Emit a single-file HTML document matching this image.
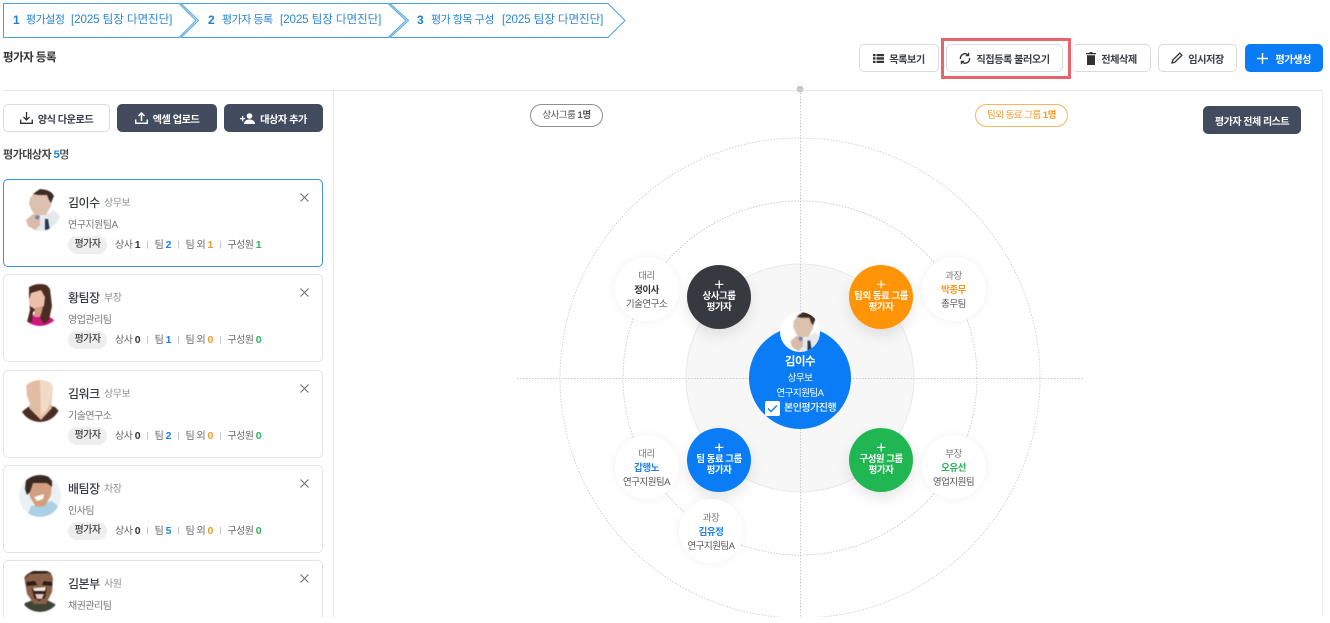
<!DOCTYPE html>
<html lang="ko"><head><meta charset="utf-8"><title>평가자 등록</title>
<style>
*{box-sizing:border-box}
html,body{margin:0;padding:0;background:#fff;width:1330px;height:623px;overflow:hidden}
body{position:relative;font-family:"Liberation Sans","Noto Sans CJK KR",sans-serif;color:#333;letter-spacing:-.5px}
#w{position:absolute;left:0;top:0;width:1330px;height:623px;overflow:hidden}
.a{position:absolute;white-space:nowrap}
.bc{font-size:11px;color:#2b86d6;line-height:18px;top:11px}
.bd{font-size:11.6px;color:#2b86d6;line-height:18px;top:11px;letter-spacing:-.1px}
.bn{font-size:12px;font-weight:700;color:#1f7fd4;line-height:18px;top:11px}
.btn{position:absolute;height:28px;border:1px solid #d9dcdf;border-radius:5px;background:#fff;display:flex;align-items:center;justify-content:center;gap:5px;font-size:10.200px;font-weight:700;color:#3a3f47}
.dk{background:#434b5e;border:0;color:#fff}
.card{position:absolute;left:3px;width:320px;height:88px;border:1px solid #e2e4e7;border-radius:5px;background:#fff}
.card.on{border-color:#3d93e0}
.card svg.f{position:absolute;left:15px;top:9px;border-radius:50%;filter:blur(.5px)}
.nm{position:absolute;left:64px;top:14px;font-size:12px;font-weight:500;color:#383c44;line-height:18px}
.rk{position:absolute;left:100px;top:16px;font-size:10px;color:#8b8f95;line-height:16px}
.tm{position:absolute;left:64px;top:38px;font-size:10px;color:#777;line-height:16px}
.tg{position:absolute;left:64px;top:56px;width:39px;height:18px;border-radius:9px;background:#eee;font-size:10px;font-weight:500;color:#444;text-align:center;line-height:18px}
.st{position:absolute;left:111px;top:56px;font-size:10px;color:#666;line-height:18px;white-space:nowrap}
.st b{font-weight:700;font-size:10.5px}
.st i{font-style:normal;color:#aaa;margin:0 6.5px;font-size:8px;position:relative;top:-1px}
.k{color:#333}.b{color:#1a82ea}.o{color:#f59a23}.g{color:#27b45a}
.x{position:absolute;left:296px;top:13px}
.c{position:absolute;border-radius:50%;text-align:center;transform:translate(-50%,-50%)}
.grp{width:64px;height:64px;color:#fff;font-size:9.500px;font-weight:700;line-height:11px;padding-top:13px;box-shadow:0 6px 14px rgba(0,0,0,.10)}
.grp span{display:block;font-size:17px;font-weight:400;line-height:13px;height:13px}
.wh{width:64px;height:64px;background:#fff;font-size:9.500px;color:#555;line-height:14.300px;padding-top:12.500px;box-shadow:0 0 10px rgba(0,0,0,.06)}
.wh b{font-weight:700;display:block}
.wh u{text-decoration:none;color:#777;display:block}
</style></head><body><div id="w">

<svg class="a" style="left:0;top:0" width="640" height="42" fill="#fff" stroke="#4a9fe0" stroke-width="1">
<polygon points="3.500,3.500 179,3.500 196,20.500 179,37.500 3.500,37.500"/>
<polygon points="181,3.500 388,3.500 406,20.500 388,37.500 181,37.500 198.500,20.500"/>
<polygon points="390,3.500 608,3.500 625,20.500 608,37.500 390,37.500 408.500,20.500"/>
</svg>
<div class="a bn" style="left:13px">1</div>
<div class="a bc" style="left:26px">평가설정</div>
<div class="a bd" style="left:71px">[2025 팀장 다면진단]</div>
<div class="a bn" style="left:208px">2</div>
<div class="a bc" style="left:222px">평가자 등록</div>
<div class="a bd" style="left:280px">[2025 팀장 다면진단]</div>
<div class="a bn" style="left:417px">3</div>
<div class="a bc" style="left:431px">평가 항목 구성</div>
<div class="a bd" style="left:502px">[2025 팀장 다면진단]</div>

<div class="a" style="left:3px;top:49px;font-size:11.500px;font-weight:700;color:#333;line-height:18px">평가자 등록</div>

<div class="btn" style="left:859px;top:44px;width:80px"><svg width="11" height="9" viewBox="0 0 11 9" fill="#333"><path d="M0 0h2.500v2.300H0zM3.500 0H11v2.300H3.500zM0 3.300h2.500v2.300H0zM3.500 3.300H11v2.300H3.500zM0 6.700h2.500V9H0zM3.500 6.700H11V9H3.500z"/></svg>목록보기</div>
<div class="btn" style="left:946px;top:44px;width:117px"><svg width="12" height="13" viewBox="0 0 12 13" fill="none" stroke="#333" stroke-width="1.400"><path d="M1.500 7A4.500 4.500 0 0 1 9 3"/><path d="M10.500 6A4.500 4.500 0 0 1 3 10"/><path d="M9.600.8V3.600H6.800" stroke-width="1.200"/><path d="M2.400 12.200V9.400H5.200" stroke-width="1.200"/></svg>직접등록 불러오기</div>
<div class="a" style="left:941px;top:38px;width:130px;height:41px;border:3px solid #e8636a"></div>
<div class="btn" style="left:1072px;top:44px;width:79px;border-left-color:#eee"><svg width="10" height="13" viewBox="0 0 10 13" fill="#333"><path d="M3.500 0h3v1H10v1.300H0V1h3.500zM1 3.200h8V13H1z"/></svg>전체삭제</div>
<div class="btn" style="left:1158px;top:44px;width:79px"><svg width="12" height="12" viewBox="0 0 12 12" fill="none" stroke="#333" stroke-width="1.300"><path d="M1 11l.7-2.800L8.800 1.100l2.100 2.100-7.100 7.100z"/></svg>임시저장</div>
<div class="btn" style="left:1245px;top:44px;width:78px;background:#0a7cf5;border:0;color:#fff"><svg width="11" height="11" viewBox="0 0 11 11" stroke="#fff" stroke-width="1.400"><path d="M5.500 0v11M0 5.500h11"/></svg>&nbsp;평가생성</div>

<div class="a" style="left:3px;top:90px;width:1320px;height:1px;background:#e6e7e9"></div>
<div class="a" style="left:333px;top:90px;width:1px;height:527px;background:#e6e7e9"></div>
<div class="a" style="left:1322px;top:90px;width:1px;height:527px;background:#eeeff0"></div>

<div class="btn" style="left:3px;top:104px;width:107px"><svg width="13" height="12" viewBox="0 0 13 12" fill="none" stroke="#333" stroke-width="1.300"><path d="M.7 7.500v3.800h11.600V7.500M6.500 0v8M3.500 5l3 3 3-3"/></svg>양식 다운로드</div>
<div class="btn dk" style="left:117px;top:104px;width:100px"><svg width="13" height="12" viewBox="0 0 13 12" fill="none" stroke="#fff" stroke-width="1.500"><path d="M.7 7.500v3.800h11.600V7.500M6.500 9V1M3.500 4l3-3 3 3"/></svg>엑셀 업로드</div>
<div class="btn dk" style="left:224px;top:104px;width:99px"><svg width="15" height="11" viewBox="0 0 15 11" fill="#fff"><circle cx="9.500" cy="3" r="2.800"/><path d="M4 11c0-3 2.500-4.500 5.500-4.500S15 8 15 11zM2 3h1.200v2H5v1.200H3.200v2H2v-2H0V5h2z"/></svg>대상자 추가</div>

<div class="a" style="left:3px;top:146px;font-size:11px;font-weight:700;color:#444;line-height:18px">평가대상자 <span class="b">5</span><span style="font-weight:500">명</span></div>

<svg width="0" height="0" style="position:absolute"><defs>
<symbol id="f1" viewBox="0 0 42 42">
<path d="M15 42 15 30 24 27 35 21 41 27 42 42Z" fill="#e6e9ec"/>
<path d="M26 30 26 42 31 42 29 30Z" fill="#233a52"/>
<path d="M11 9 17 2 29 1 33 7 32 17 27 26 17 27 13 22 10 15Z" fill="#dcc2ae"/>
<path d="M14 5 21 0 31 1 35 7 32 14 30 11 28 6 19 6Z" fill="#3c2c28"/>
<path d="M7 31 14 25 21 27 21 36 16 41 9 37Z" fill="#dabaa8"/>
<path d="M17 26 21 27 19 31 16 29Z" fill="#6a82ac"/>
</symbol>
<symbol id="f2" viewBox="0 0 42 42">
<path d="M8 42 11 32 19 30 28 31 35 36 35 42Z" fill="#d4147e"/>
<path d="M10 3 15 0 27 0 31 5 33 22 30 36 25 40 21 34 24 22 14 28 13 38 8 38 11 26 10 12Z" fill="#4a2c22"/>
<path d="M12 9 22 6 26 13 25 22 17 26 11 22 10 16Z" fill="#ecc0a8"/>
<path d="M16 24 24 22 21 33 15 33Z" fill="#d79a84"/>
</symbol>
<symbol id="f3" viewBox="0 0 42 42">
<path d="M0 34 9 27 14 25 28 25 36 27 42 33 40 38 30 42 13 42 4 39Z" fill="#4a2e24"/>
<path d="M7 3 14 0 30 0 34 8 33 18 32 24 33 28 22 40 10 28 11 24 8 16Z" fill="#e3bda3"/>
<path d="M21 0 30 0 34 8 32 20 28 30 22 36Z" fill="#f0dbc7"/>
</symbol>
<symbol id="f4" viewBox="0 0 42 42">
<rect width="42" height="42" fill="#e9f1f2"/>
<path d="M8 42 12 31 22 30 32 26 38 30 40 38 30 42Z" fill="#a9d0e4"/>
<path d="M8 6 15 1 29 1 33 7 32 20 26 31 17 32 11 22Z" fill="#d49f80"/>
<path d="M6 14 7 5 14 0 28 0 33 6 33 12 28 8 14 8 11 17 8 20Z" fill="#3b2a22"/>
<path d="M15 22 25 19 24 24 18 26Z" fill="#fff"/>
</symbol>
<symbol id="f5" viewBox="0 0 42 42">
<path d="M2 42 6 33 14 30 28 30 36 34 38 42Z" fill="#3f4534"/>
<path d="M5 6 9 1 31 1 34 8 33 22 27 34 15 34 8 24Z" fill="#8b6248"/>
<path d="M6 9 9 1 31 1 34 8 32 3 10 4Z" fill="#2f221b"/>
<path d="M7 12 16 11 18 15 8 16ZM23 15 25 11 33 12 33 16Z" fill="#2b1d17"/>
<path d="M13 18 28 17 26 28 20 31 15 28Z" fill="#3a1c18"/>
<path d="M14 18 27 17 26 21 15 21Z" fill="#f3ede4"/>
<path d="M16 24 25 24 23 29 18 29Z" fill="#d9c8c2"/>
</symbol>
</defs></svg>

<div class="card on" style="top:179px"><svg class="f" width="42" height="42"><use href="#f1"/></svg><div class="nm">김이수</div><div class="rk">상무보</div><div class="tm">연구지원팀A</div><div class="tg">평가자</div><div class="st">상사 <b class="k">1</b><i>|</i>팀 <b class="b">2</b><i>|</i>팀 외 <b class="o">1</b><i>|</i>구성원 <b class="g">1</b></div><svg class="x" width="9" height="9" stroke="#777" stroke-width="1.200"><path d="M.5.500l8 8M8.500.500l-8 8"/></svg></div>
<div class="card" style="top:274px"><svg class="f" width="42" height="42"><use href="#f2"/></svg><div class="nm">황팀장</div><div class="rk">부장</div><div class="tm">영업관리팀</div><div class="tg">평가자</div><div class="st">상사 <b class="k">0</b><i>|</i>팀 <b class="b">1</b><i>|</i>팀 외 <b class="o">0</b><i>|</i>구성원 <b class="g">0</b></div><svg class="x" width="9" height="9" stroke="#777" stroke-width="1.200"><path d="M.5.500l8 8M8.500.500l-8 8"/></svg></div>
<div class="card" style="top:370px"><svg class="f" width="42" height="42"><use href="#f3"/></svg><div class="nm">김워크</div><div class="rk">상무보</div><div class="tm">기술연구소</div><div class="tg">평가자</div><div class="st">상사 <b class="k">0</b><i>|</i>팀 <b class="b">2</b><i>|</i>팀 외 <b class="o">0</b><i>|</i>구성원 <b class="g">0</b></div><svg class="x" width="9" height="9" stroke="#777" stroke-width="1.200"><path d="M.5.500l8 8M8.500.500l-8 8"/></svg></div>
<div class="card" style="top:465px"><svg class="f" width="42" height="42"><use href="#f4"/></svg><div class="nm">배팀장</div><div class="rk">차장</div><div class="tm">인사팀</div><div class="tg">평가자</div><div class="st">상사 <b class="k">0</b><i>|</i>팀 <b class="b">5</b><i>|</i>팀 외 <b class="o">0</b><i>|</i>구성원 <b class="g">0</b></div><svg class="x" width="9" height="9" stroke="#777" stroke-width="1.200"><path d="M.5.500l8 8M8.500.500l-8 8"/></svg></div>
<div class="a" style="left:0;top:555px;width:333px;height:62px;overflow:hidden"><div class="card" style="top:5px"><svg class="f" width="42" height="42"><use href="#f5"/></svg><div class="nm">김본부</div><div class="rk">사원</div><div class="tm">채권관리팀</div><svg class="x" width="9" height="9" stroke="#777" stroke-width="1.200"><path d="M.5.500l8 8M8.500.500l-8 8"/></svg></div></div>

<svg class="a" style="left:334px;top:86px" width="988" height="531" viewBox="334 86 988 531" fill="none">
<circle cx="800" cy="378" r="240" stroke="#d0d2d4" stroke-width="1" stroke-dasharray="1.500 1.500"/>
<circle cx="800" cy="378" r="177" stroke="#cbcdcf" stroke-width="1" stroke-dasharray="1.500 1.500"/>
<circle cx="800" cy="378" r="114" fill="#f7f7f7" stroke="#e8e8e8"/>
<path d="M800.500 90V617M517 378.500H1083" stroke="#c8cacc" stroke-dasharray="1.500 1.500"/>
<circle cx="800" cy="89" r="3.500" fill="#c6c8cb"/>
</svg>

<div class="a" style="left:530px;top:104px;width:73px;height:23px;border:1px solid #8c8f94;border-radius:12px;font-size:9.500px;color:#555;text-align:center;line-height:21px;background:#fff">상사그룹 <b>1명</b></div>
<div class="a" style="left:975px;top:104px;width:93px;height:23px;border:1px solid #f6b45e;border-radius:12px;font-size:9.500px;color:#f59a23;text-align:center;line-height:21px;background:#fff">팀외 동료 그룹 <b>1명</b></div>
<div class="btn dk" style="left:1203px;top:106px;width:98px;font-size:10px">평가자 전체 리스트</div>

<div class="c" style="left:800px;top:378px;width:102px;height:102px;background:#0a7cf5"></div>
<div class="c" style="left:800px;top:332px;width:40px;height:40px;background:#fff;overflow:hidden"><svg style="position:absolute;left:4px;top:0;filter:blur(.4px)" width="38" height="40" viewBox="0 0 42 42" preserveAspectRatio="none"><use href="#f1"/></svg></div>
<div class="a" style="left:749px;width:102px;text-align:center;top:353px;font-size:11.500px;font-weight:700;color:#fff;line-height:18px">김이수</div>
<div class="a" style="left:749px;width:102px;text-align:center;top:371px;font-size:9.500px;color:#fff;line-height:16px">상무보</div>
<div class="a" style="left:749px;width:102px;text-align:center;top:386px;font-size:9.500px;color:#fff;line-height:16px">연구지원팀A</div>
<div class="a" style="left:765px;top:401px;width:15px;height:15px;background:#fff;border-radius:2px"><svg width="15" height="15" fill="none" stroke="#1a7fe8" stroke-width="1.500"><path d="M3 7.500l3 3 6-6"/></svg></div>
<div class="a" style="left:784px;top:400px;font-size:10px;font-weight:500;color:#fff;line-height:17px">본인평가진행</div>

<div class="c grp" style="left:719px;top:297px;background:#363a40"><span>+</span>상사그룹<br>평가자</div>
<div class="c grp" style="left:881px;top:297px;background:#ff9406"><span>+</span>팀외 동료 그룹<br>평가자</div>
<div class="c grp" style="left:719px;top:459.500px;background:#0a7cf5"><span>+</span>팀 동료 그룹<br>평가자</div>
<div class="c grp" style="left:881px;top:459.500px;background:#20b652"><span>+</span>구성원 그룹<br>평가자</div>

<div class="c wh" style="left:646.500px;top:289px"><u>대리</u><b class="k">정이사</b>기술연구소</div>
<div class="c wh" style="left:953.500px;top:289px"><u>과장</u><b class="o">박종무</b>총무팀</div>
<div class="c wh" style="left:646.500px;top:467px"><u>대리</u><b class="b">갑행노</b>연구지원팀A</div>
<div class="c wh" style="left:953.500px;top:467px"><u>부장</u><b class="g">오유선</b>영업지원팀</div>
<div class="c wh" style="left:711px;top:531px"><u>과장</u><b class="b">김유정</b>연구지원팀A</div>

</div></body></html>
